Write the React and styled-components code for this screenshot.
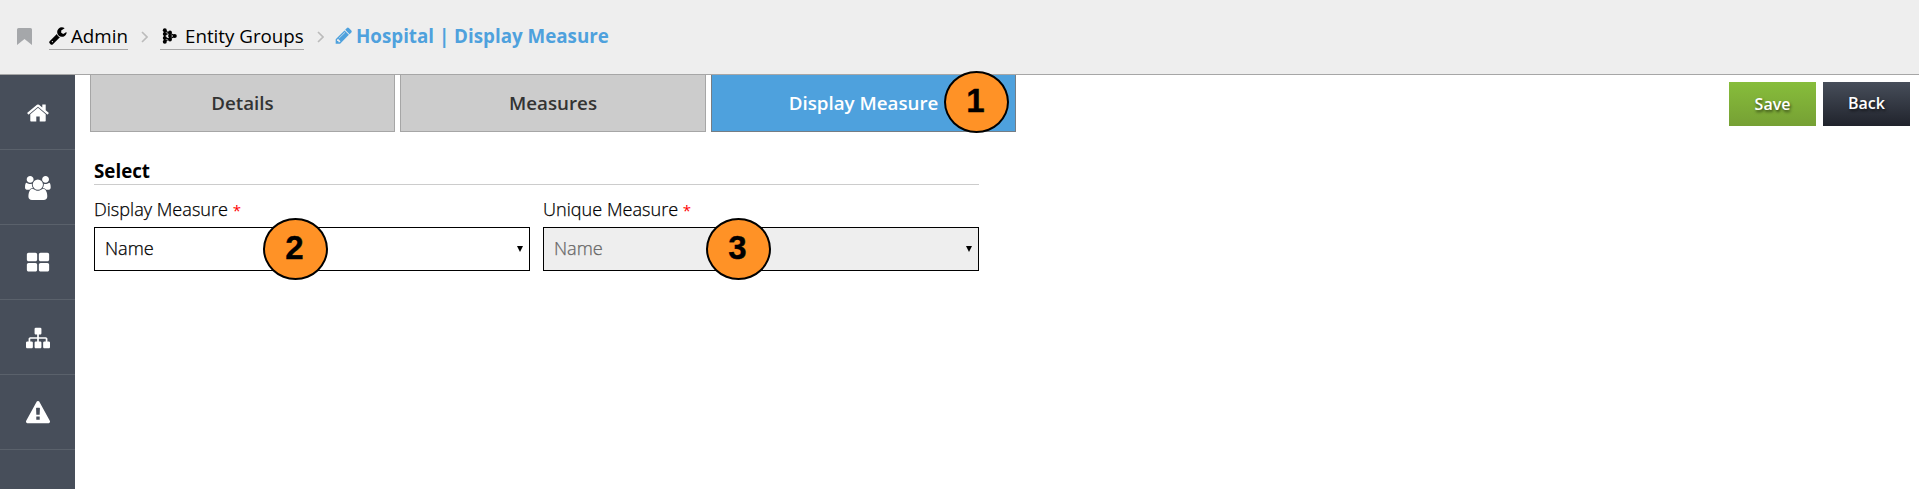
import React from "react";
import styled, { createGlobalStyle } from "styled-components";

const GlobalStyle = createGlobalStyle`
  *, *::before, *::after { box-sizing: border-box; }
  body {
    margin: 0;
    background: #fff;
    color: #000;
    font-family: "Open Sans", "Noto Sans", sans-serif;
    font-size: 18.75px;
    overflow: hidden;
  }
`;

const Page = styled.div`
  display: flex;
  flex-direction: column;
  height: 100vh;
`;

const Header = styled.header`
  display: flex;
  align-items: center;
  flex: 0 0 75px;
  padding: 0 0 2px 17px;
  background: #eee;
  border-bottom: 1px solid #a6a6a6;
`;

const Icon = styled.svg`
  display: block;
  flex: none;
  fill: currentColor;
  width: ${(p) => p.$w}px;
  height: ${(p) => p.$h || p.$w}px;
`;

const Bookmark = styled(Icon)`
  color: #a5a7aa;
  margin: 1px 17px 0 0;
`;

const Crumb = styled.a`
  display: flex;
  align-items: center;
  gap: ${(p) => p.$gap}px;
  width: ${(p) => p.$width}px;
  height: 26px;
  padding-bottom: 1px;
  margin-top: 1px;
  line-height: 24px;
  white-space: nowrap;
  color: #000;
  border-bottom: 1px solid #a6a6a6;
`;

const CurrentCrumb = styled(Crumb)`
  width: auto;
  margin-left: -1px;
  color: #4ea1dd;
  font-weight: 700;
  border-bottom-color: transparent;
`;

const Chevron = styled.svg`
  flex: none;
  width: 7px;
  height: 12px;
  margin: 1px 12px 0 13px;
  fill: none;
  stroke: #bbb;
  stroke-width: 1.6;
`;

const Body = styled.div`
  display: flex;
  flex: 1;
  min-height: 0;
`;

const Sidebar = styled.nav`
  flex: 0 0 75px;
  background: #474e5a;
`;

const NavItem = styled.a`
  display: flex;
  align-items: center;
  justify-content: center;
  height: 75px;
  padding: 1px 0 0 1px;
  color: #fff;
  border-bottom: 1px solid #5a616b;
`;

const Main = styled.main`
  flex: 1;
  padding-left: 15px;
`;

const TopBar = styled.div`
  display: flex;
  justify-content: space-between;
  padding-right: 9px;
`;

const Tabs = styled.div`
  display: grid;
  grid-template-columns: 305px 306px 305px;
  gap: 5px;
`;

const Tab = styled.div`
  position: relative;
  display: flex;
  align-items: center;
  justify-content: center;
  height: 57px;
  padding-bottom: 1px;
  font-weight: 600;
  color: ${(p) => (p.$active ? "#fff" : "#333")};
  background: ${(p) => (p.$active ? "#4ea1dd" : "#ccc")};
  border: 1px solid ${(p) => (p.$active ? "#757d84" : "#a6a6a6")};
  border-top: 0;
`;

const Actions = styled.div`
  display: flex;
  gap: 7px;
  padding-top: 7px;
`;

const Button = styled.button`
  width: 87px;
  height: 44px;
  padding: ${(p) => (p.$primary ? "0" : "0 0 2px")};
  border: 0;
  font: 600 16px "Open Sans", sans-serif;
  color: #fff;
  text-shadow: 1px 2px 3px rgba(0, 0, 0, 0.6);
  background: ${(p) =>
    p.$primary
      ? "linear-gradient(#87bd3b, #76a034)"
      : "linear-gradient(#474e5a, #20232c)"};
`;

const Form = styled.section`
  width: 885px;
  margin: 23px 0 0 4px;
`;

const Legend = styled.h2`
  height: 30px;
  margin: 0;
  font-size: 18.75px;
  font-weight: 700;
  line-height: 31px;
  border-bottom: 1px solid #ccc;
`;

const Fields = styled.div`
  display: grid;
  grid-template-columns: 436px 436px;
  gap: 13px;
`;

const Field = styled.div`
  position: relative;
`;

const Label = styled.label`
  display: block;
  height: 42px;
  padding-top: 12px;
  font-size: 18.1px;
  font-weight: 300;
  line-height: 25px;
  -webkit-text-stroke: 0.25px currentColor;
`;

const Required = styled.span`
  color: #f00;
  font-size: 15px;
  font-weight: 400;
  -webkit-text-stroke: 0;
`;

const SelectBox = styled.div`
  display: flex;
  align-items: center;
  justify-content: space-between;
  height: 44px;
  padding: 0 6px 2px 10px;
  font-size: 18.2px;
  font-weight: 300;
  -webkit-text-stroke: 0.25px currentColor;
  border: 1px solid #000;
  color: ${(p) => (p.$disabled ? "#666" : "#000")};
  background: ${(p) => (p.$disabled ? "#eee" : "#fff")};
`;

const Arrow = styled.span`
  margin-top: 1px;
  border: 3px solid transparent;
  border-top: 6px solid #000;
  border-bottom: 0;
`;

const Badge = styled.span`
  position: absolute;
  left: ${(p) => p.$left}px;
  top: ${(p) => p.$top}px;
  z-index: 1;
  display: flex;
  align-items: center;
  justify-content: center;
  width: 65px;
  height: 62px;
  padding: 0 2px 3px 0;
  border: 2px solid #000;
  border-radius: 50%;
  background: #ff9226;
  color: #000;
  font: 700 33px "Liberation Sans", Arial, sans-serif;
  -webkit-text-stroke: 0.4px #000;
`;

const paths = {
  home: "M1472 992v480q0 26-19 45t-45 19h-384v-384h-256v384h-384q-26 0-45-19t-19-45v-480q0-1 .5-3t.5-3l575-474 575 474q1 2 1 6zm223-69l-62 74q-8 9-21 11h-3q-13 0-21-7l-692-577-692 577q-12 8-24 7-13-2-21-11l-62-74q-8-10-7-23.5t11-21.5l719-599q32-26 76-26t76 26l244 204v-195q0-14 9-23t23-9h192q14 0 23 9t9 23v408l219 182q10 8 11 21.5t-7 23.5z",
  users: "M593 896q-162 5-265 128h-134q-82 0-138-40.5t-56-118.5q0-353 124-353 6 0 43.5 21t97.5 42.5 119 21.5q67 0 133-23-5 37-5 66 0 139 81 256zm1071 637q0 120-73 189.5t-194 69.5h-874q-121 0-194-69.5t-73-189.5q0-53 3.5-103.5t14-109 26.5-108.5 43-97.5 62-81 85.5-53.5 111.5-20q10 0 43 21.5t73 48 107 48 135 21.5 135-21.5 107-48 73-48 43-21.5q61 0 111.5 20t85.5 53.5 62 81 43 97.5 26.5 108.5 14 109 3.5 103.5zm-1024-1277q0 106-75 181t-181 75-181-75-75-181 75-181 181-75 181 75 75 181zm704 384q0 159-112.5 271.5t-271.5 112.5-271.5-112.5-112.5-271.5 112.5-271.5 271.5-112.5 271.5 112.5 112.5 271.5zm576 225q0 78-56 118.5t-138 40.5h-134q-103-123-265-128 81-117 81-256 0-29-5-66 66 23 133 23 59 0 119-21.5t97.5-42.5 43.5-21q124 0 124 353zm-128-609q0 106-75 181t-181 75-181-75-75-181 75-181 181-75 181 75 75 181z",
  grid: "M832 1024v384q0 52-38 90t-90 38h-512q-52 0-90-38t-38-90v-384q0-52 38-90t90-38h512q52 0 90 38t38 90zm0-768v384q0 52-38 90t-90 38h-512q-52 0-90-38t-38-90v-384q0-52 38-90t90-38h512q52 0 90 38t38 90zm896 768v384q0 52-38 90t-90 38h-512q-52 0-90-38t-38-90v-384q0-52 38-90t90-38h512q52 0 90 38t38 90zm0-768v384q0 52-38 90t-90 38h-512q-52 0-90-38t-38-90v-384q0-52 38-90t90-38h512q52 0 90 38t38 90z",
  sitemap: "M1792 1248v320q0 40-28 68t-68 28h-320q-40 0-68-28t-28-68v-320q0-40 28-68t68-28h96v-192h-512v192h96q40 0 68 28t28 68v320q0 40-28 68t-68 28h-320q-40 0-68-28t-28-68v-320q0-40 28-68t68-28h96v-192h-512v192h96q40 0 68 28t28 68v320q0 40-28 68t-68 28h-320q-40 0-68-28t-28-68v-320q0-40 28-68t68-28h96v-192q0-52 38-90t90-38h512v-192h-96q-40 0-68-28t-28-68v-320q0-40 28-68t68-28h320q40 0 68 28t28 68v320q0 40-28 68t-68 28h-96v192h512q52 0 90 38t38 90v192h96q40 0 68 28t28 68z",
  warning: "M1024 1375v-190q0-14-9.5-23.5t-22.5-9.5h-192q-13 0-22.5 9.5t-9.5 23.5v190q0 14 9.5 23.5t22.5 9.5h192q13 0 22.5-9.5t9.5-23.5zm-2-374l18-459q0-12-10-19-13-11-24-11h-220q-11 0-24 11-10 7-10 21l17 457q0 10 10 16.5t24 6.5h185q14 0 23.5-6.5t10.5-16.5zm-14-934l768 1408q35 63-2 126-17 29-46.5 46t-63.5 17h-1536q-34 0-63.5-17t-46.5-46q-37-63-2-126l768-1408q17-31 47-49t65-18 65 18 47 49z",
  wrench: "M448 1472q0-26-19-45t-45-19-45 19-19 45 19 45 45 19 45-19 19-45zm644-420l-682 682q-37 37-90 37-52 0-91-37l-106-108q-38-36-38-90 0-53 38-91l681-681q39 98 114.5 173.5t173.5 114.5zm634-435q0 39-23 106-47 134-164.5 217.5t-258.5 83.5q-185 0-316.5-131.5t-131.5-316.5 131.5-316.5 316.5-131.5q58 0 121.5 16.5t107.5 46.5q16 11 16 28t-16 28l-293 169v224l193 107q5-3 79-48.5t135.5-81 70.5-35.5q15 0 23.5 10t8.5 25z",
  pencil: "M491 1536l91-91-235-235-91 91v107h128v128h107zm523-928q0-22-22-22-10 0-17 7l-542 542q-7 7-7 17 0 22 22 22 10 0 17-7l542-542q7-7 7-17zm-54-192l416 416-832 832h-416v-416zm683 96q0 53-37 90l-166 166-416-416 166-165q36-38 90-38 53 0 91 38l235 234q37 39 37 91z",
};

const navItems = [
  { name: "home", box: "0 0 1792 1792", width: 24 },
  { name: "users", box: "0 0 1920 1792", width: 25.7 },
  { name: "grid", box: "0 0 1792 1792", width: 24 },
  { name: "sitemap", box: "0 0 1792 1792", width: 24 },
  { name: "warning", box: "0 0 1792 1792", width: 24 },
];

function Separator() {
  return (
    <Chevron viewBox="0 0 7 12">
      <path d="M1 1l5 5-5 5" />
    </Chevron>
  );
}

function GroupIcon() {
  return (
    <Icon $w={22} $h={16} viewBox="0 0 22 16">
      <path d="M4.6 2.5v11M4.6 3l5 2v6l-5 2M4.6 6.3l5-1M4.6 9.7l5 1.3M9.6 5l5.4 3-5.4 3" fill="none" stroke="currentColor" strokeWidth="1.2" />
      {[2.3, 6, 10, 13.7].map((y) => (
        <circle key={y} cx="4.8" cy={y} r="2" />
      ))}
      {[4.5, 8, 11.5].map((y) => (
        <circle key={y} cx="10" cy={y} r="1.9" />
      ))}
      <circle cx="14.7" cy="8" r="2.1" />
    </Icon>
  );
}

export default function App() {
  return (
    <>
      <GlobalStyle />
      <Page>
        <Header>
          <Bookmark $w={15} $h={17} viewBox="0 0 15 17">
            <path d="M1.5 0h12q1.5 0 1.5 1.5V17L7.5 11 0 17V1.5Q0 0 1.5 0z" />
          </Bookmark>
          <Crumb $gap={3} $width={79}>
            <Icon $w={19} viewBox="64 0 1792 1792"><path d={paths.wrench} /></Icon>
            Admin
          </Crumb>
          <Separator />
          <Crumb $gap={3} $width={144}>
            <GroupIcon />
            Entity Groups
          </Crumb>
          <Separator />
          <CurrentCrumb $gap={2}>
            <Icon $w={19} viewBox="64 0 1792 1792"><path d={paths.pencil} /></Icon>
            Hospital | Display Measure
          </CurrentCrumb>
        </Header>
        <Body>
          <Sidebar>
            {navItems.map((item) => (
              <NavItem key={item.name}>
                <Icon $w={item.width} $h={24} viewBox={item.box}><path d={paths[item.name]} /></Icon>
              </NavItem>
            ))}
          </Sidebar>
          <Main>
            <TopBar>
              <Tabs>
                <Tab>Details</Tab>
                <Tab>Measures</Tab>
                <Tab $active>
                  Display Measure
                  <Badge $left={232} $top={-4}>1</Badge>
                </Tab>
              </Tabs>
              <Actions>
                <Button $primary>Save</Button>
                <Button>Back</Button>
              </Actions>
            </TopBar>
            <Form>
              <Legend>Select</Legend>
              <Fields>
                <Field>
                  <Label>Display Measure <Required>*</Required></Label>
                  <SelectBox>Name<Arrow /></SelectBox>
                  <Badge $left={169} $top={33}>2</Badge>
                </Field>
                <Field>
                  <Label>Unique Measure <Required>*</Required></Label>
                  <SelectBox $disabled>Name<Arrow /></SelectBox>
                  <Badge $left={163} $top={33}>3</Badge>
                </Field>
              </Fields>
            </Form>
          </Main>
        </Body>
      </Page>
    </>
  );
}
